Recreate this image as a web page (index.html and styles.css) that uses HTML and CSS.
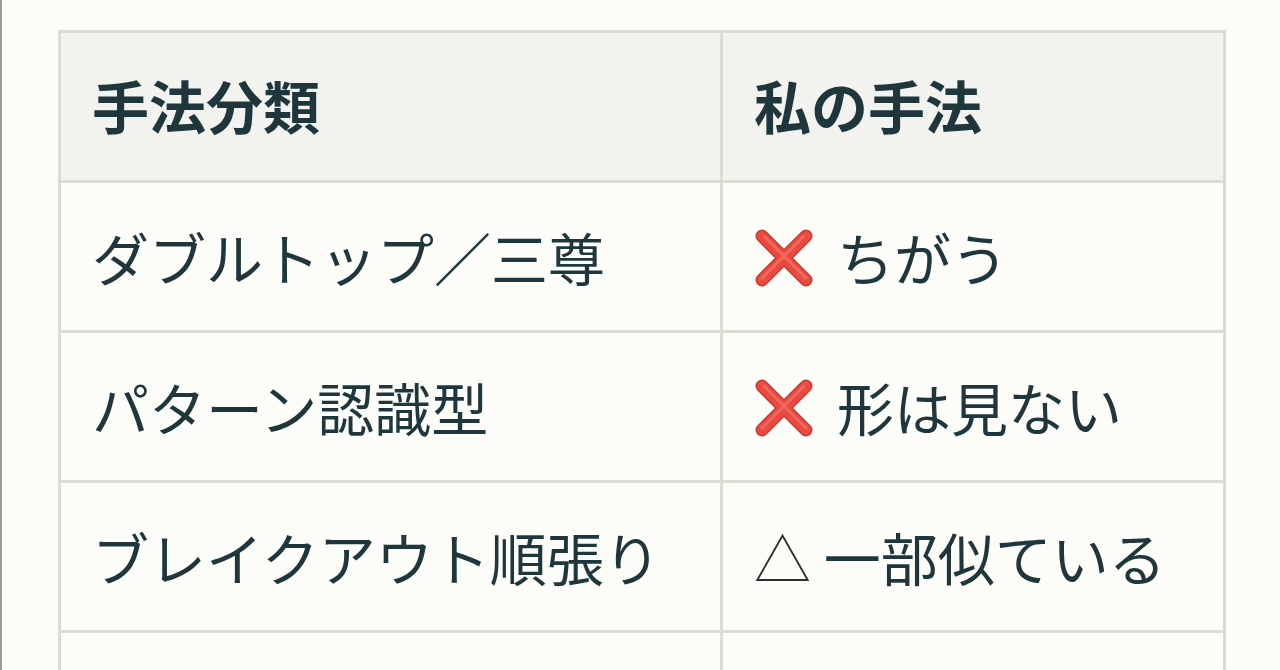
FILE: index.html
```html
<!DOCTYPE html>
<html lang="ja">
<head>
<meta charset="utf-8">
<link rel="stylesheet" href="styles.css">
</head>
<body>
<div class="page">
  <table class="methods">
    <thead>
      <tr><th class="c1">手法分類</th><th class="c2">私の手法</th></tr>
    </thead>
    <tbody>
      <tr><td>ダブルトップ／三尊</td><td><span class="cross"><svg viewBox="0 0 64 64" width="64" height="64"><g stroke-linecap="round"><path d="M10 10 L54 54 M54 10 L10 54" stroke="#c73a32" stroke-width="13" fill="none"/><path d="M10 10 L54 54 M54 10 L10 54" stroke="#ea4a40" stroke-width="10" fill="none"/><path d="M12 10 L54 52 M52 10 L10 52" stroke="#f47d72" stroke-width="3" fill="none" opacity="0.6"/></g></svg></span>ちがう</td></tr>
      <tr><td>パターン認識型</td><td><span class="cross"><svg viewBox="0 0 64 64" width="64" height="64"><g stroke-linecap="round"><path d="M10 10 L54 54 M54 10 L10 54" stroke="#c73a32" stroke-width="13" fill="none"/><path d="M10 10 L54 54 M54 10 L10 54" stroke="#ea4a40" stroke-width="10" fill="none"/><path d="M12 10 L54 52 M52 10 L10 52" stroke="#f47d72" stroke-width="3" fill="none" opacity="0.6"/></g></svg></span>形は見ない</td></tr>
      <tr><td>ブレイクアウト順張り</td><td><span class="tri">△</span> 一部似ている</td></tr>
      <tr><td>&nbsp;</td><td>&nbsp;</td></tr>
    </tbody>
  </table>
</div>
</body>
</html>
```
FILE: styles.css
```css
html, body {
  margin: 0;
  padding: 0;
  background: #fcfcf8;
  height: 100%;
  overflow: hidden;
}
body {
  border-left: 2px solid #9a9a98;
  box-sizing: border-box;
}
.page {
  padding: 30px 0 0 56px;
}
.methods {
  border-collapse: collapse;
  width: 1165px;
  table-layout: fixed;
  font-family: "Noto Sans CJK JP", "Noto Sans", sans-serif;
  color: #1e363c;
  font-size: 57px;
}
.methods th, .methods td {
  border: 3px solid #dcdcd3;
  height: 150px;
  box-sizing: border-box;
  padding: 0 0 0 31px;
  text-align: left;
  vertical-align: middle;
  line-height: 1.2;
  white-space: nowrap;
}
.methods th {
  background: #f2f2ee;
  font-weight: 700;
  padding-bottom: 4px;
}
.methods td {
  background: #fcfcf8;
  font-weight: 400;
}
.c1 { width: 662px; }
.c2 { width: 503px; }
.cross {
  display: inline-block;
  width: 64px;
  height: 64px;
  vertical-align: -9px;
  margin-right: 21px;
  margin-left: -2px;
}
.cross svg { display: block; }
.tri {
  color: #2a2f30;
  font-weight: 300;
}
```
